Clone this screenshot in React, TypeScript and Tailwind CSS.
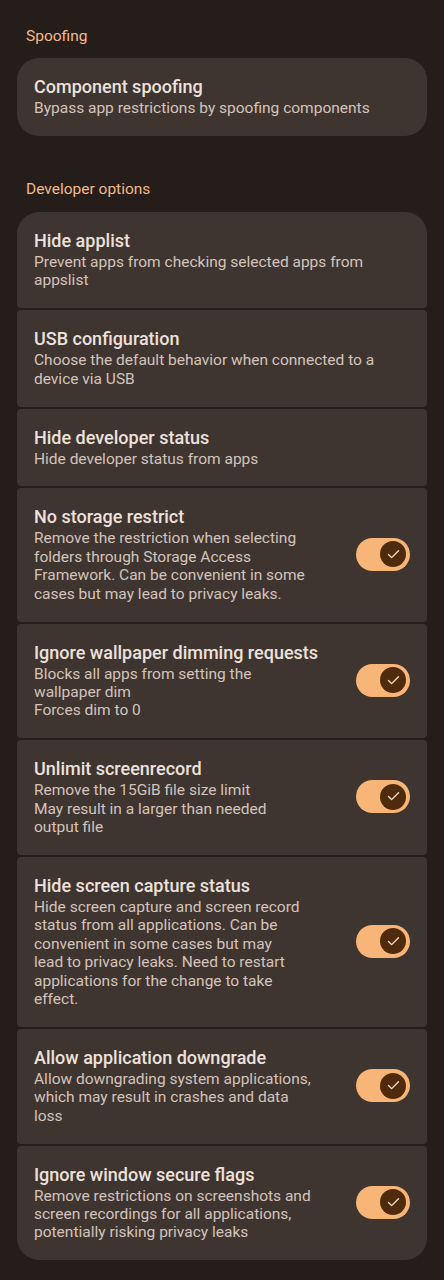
import { Check } from "lucide-react";

type Item = {
  title: string;
  summary: string[];
  toggle?: boolean;
};

// summary lines follow the wrapping of the device screen
const spoofing: Item[] = [
  {
    title: "Component spoofing",
    summary: ["Bypass app restrictions by spoofing components"],
  },
];

const developer: Item[] = [
  {
    title: "Hide applist",
    summary: ["Prevent apps from checking selected apps from", "appslist"],
  },
  {
    title: "USB configuration",
    summary: ["Choose the default behavior when connected to a", "device via USB"],
  },
  {
    title: "Hide developer status",
    summary: ["Hide developer status from apps"],
  },
  {
    title: "No storage restrict",
    summary: [
      "Remove the restriction when selecting",
      "folders through Storage Access",
      "Framework. Can be convenient in some",
      "cases but may lead to privacy leaks.",
    ],
    toggle: true,
  },
  {
    title: "Ignore wallpaper dimming requests",
    summary: ["Blocks all apps from setting the", "wallpaper dim", "Forces dim to 0"],
    toggle: true,
  },
  {
    title: "Unlimit screenrecord",
    summary: [
      "Remove the 15GiB file size limit",
      "May result in a larger than needed",
      "output file",
    ],
    toggle: true,
  },
  {
    title: "Hide screen capture status",
    summary: [
      "Hide screen capture and screen record",
      "status from all applications. Can be",
      "convenient in some cases but may",
      "lead to privacy leaks. Need to restart",
      "applications for the change to take",
      "effect.",
    ],
    toggle: true,
  },
  {
    title: "Allow application downgrade",
    summary: [
      "Allow downgrading system applications,",
      "which may result in crashes and data",
      "loss",
    ],
    toggle: true,
  },
  {
    title: "Ignore window secure flags",
    summary: [
      "Remove restrictions on screenshots and",
      "screen recordings for all applications,",
      "potentially risking privacy leaks",
    ],
    toggle: true,
  },
];

function Switch() {
  return (
    <div className="flex h-[33px] w-[54px] shrink-0 items-center justify-end rounded-full bg-[#f7b677] pr-[4px]">
      <div className="flex h-[26px] w-[26px] items-center justify-center rounded-full bg-[#4f2a0c]">
        <Check size={15} strokeWidth={2.25} className="text-[#f6dcc4]" />
      </div>
    </div>
  );
}

function Group({ items }: { items: Item[] }) {
  return (
    <div className="flex flex-col gap-[2px] overflow-hidden rounded-[22px]">
      {items.map((item) => (
        <div
          key={item.title}
          className="flex items-center rounded-[4px] bg-[#3e3531] px-[17px] pt-[17px] pb-[18.5px]"
        >
          <div className="min-w-0 flex-1">
            <p className="whitespace-nowrap text-[18px] font-medium leading-[24px] text-[#eee1db]">
              {item.title}
            </p>
            {item.summary.map((line) => (
              <p
                key={line}
                className="whitespace-nowrap text-[15.5px] leading-[18.4px] text-[#d5c3bb]"
              >
                {line}
              </p>
            ))}
          </div>
          {item.toggle ? <Switch /> : null}
        </div>
      ))}
    </div>
  );
}

function Header({ label }: { label: string }) {
  return (
    <p className="px-[9px] text-[15.5px] leading-[20px] text-[#f3b98a]">{label}</p>
  );
}

export default function App() {
  return (
    <div
      className="min-h-[1280px] bg-[#251d1a] px-[17px] pt-[26px] pb-[18px]"
      style={{ fontFamily: "Roboto, 'Open Sans', sans-serif" }}
    >
      <Header label="Spoofing" />
      <div className="mt-[12px]">
        <Group items={spoofing} />
      </div>
      <div className="mt-[43px]">
        <Header label="Developer options" />
      </div>
      <div className="mt-[13px]">
        <Group items={developer} />
      </div>
    </div>
  );
}
